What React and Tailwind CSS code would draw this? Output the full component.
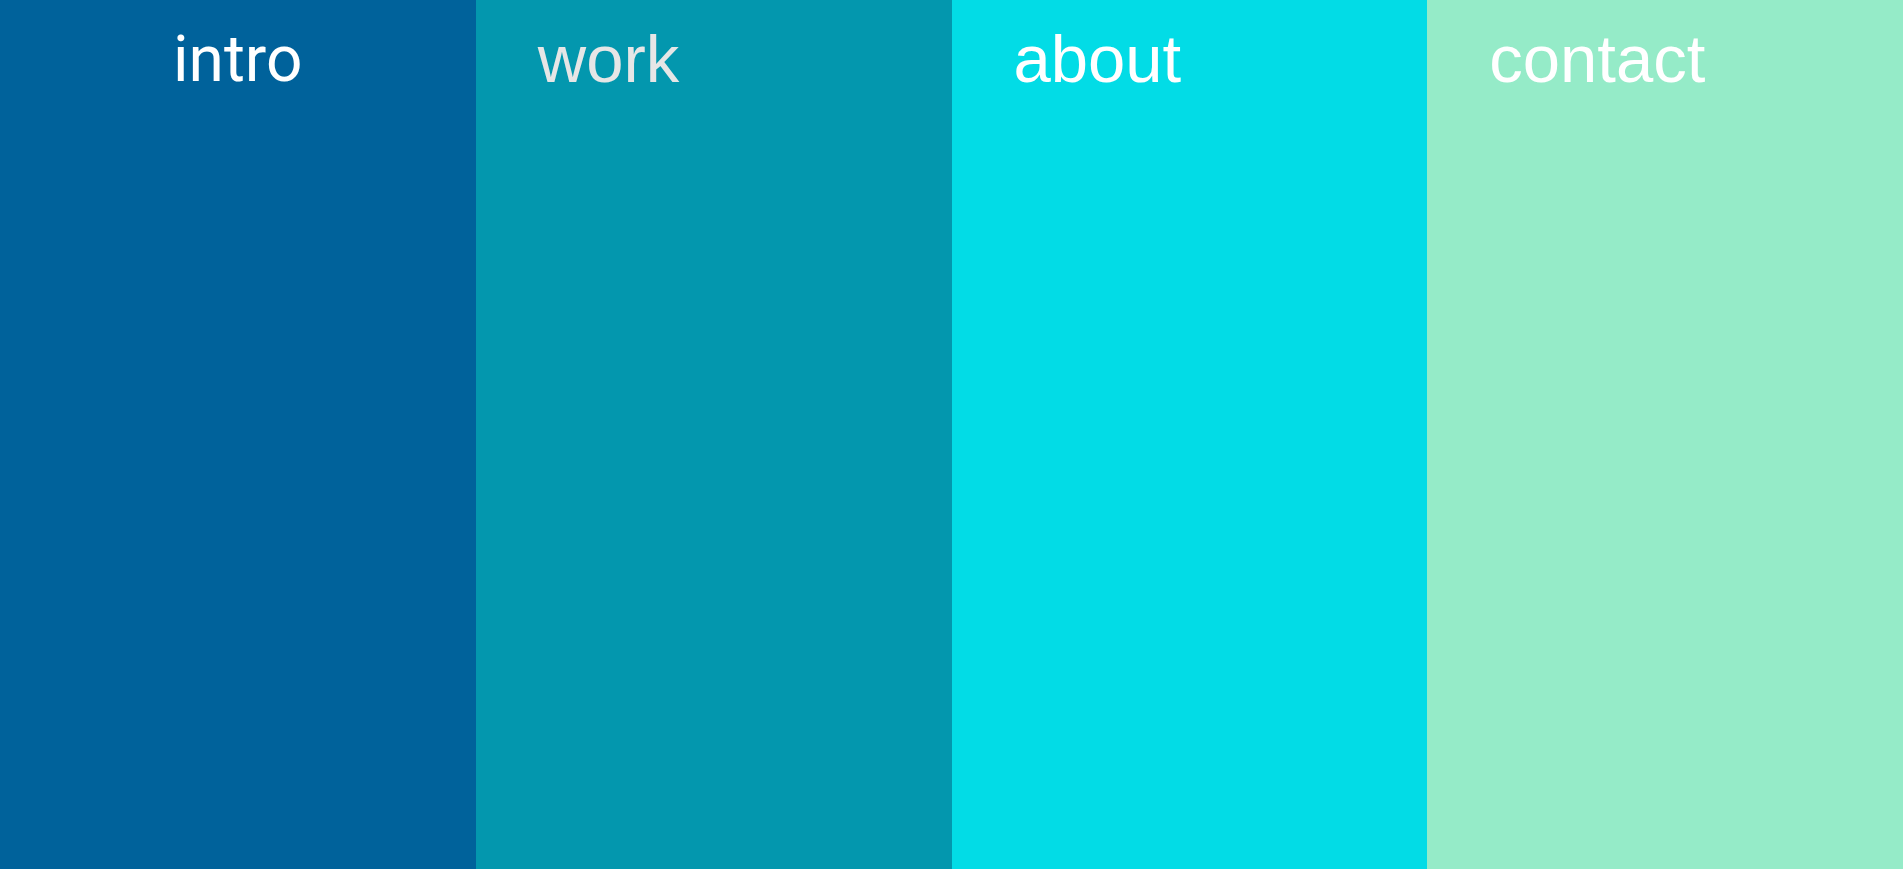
export default function App() {
  return (
    <div className="grid grid-cols-4 h-[869px] w-full overflow-hidden">
      <div className="bg-[#00629b] pl-[173px] pt-[26px]">
        <span className="block text-[64px] leading-[68px] text-white" style={{ fontFamily: 'Roboto, sans-serif' }}>intro</span>
      </div>
      <div className="bg-[#0397ae] pl-[62px] pt-[25px]">
        <span className="block text-[67px] leading-[68px] text-[#e6e6e6]" style={{ fontFamily: '"Liberation Sans", Arial, sans-serif' }}>work</span>
      </div>
      <div className="bg-[#02dce6] pl-[62px] pt-[25px]">
        <span className="block text-[67px] leading-[68px] text-white" style={{ fontFamily: '"Liberation Sans", Arial, sans-serif' }}>about</span>
      </div>
      <div className="bg-[#95ebc8] pl-[62px] pt-[25px]">
        <span className="block text-[67px] leading-[68px] text-white" style={{ fontFamily: '"Liberation Sans", Arial, sans-serif' }}>contact</span>
      </div>
    </div>
  );
}
